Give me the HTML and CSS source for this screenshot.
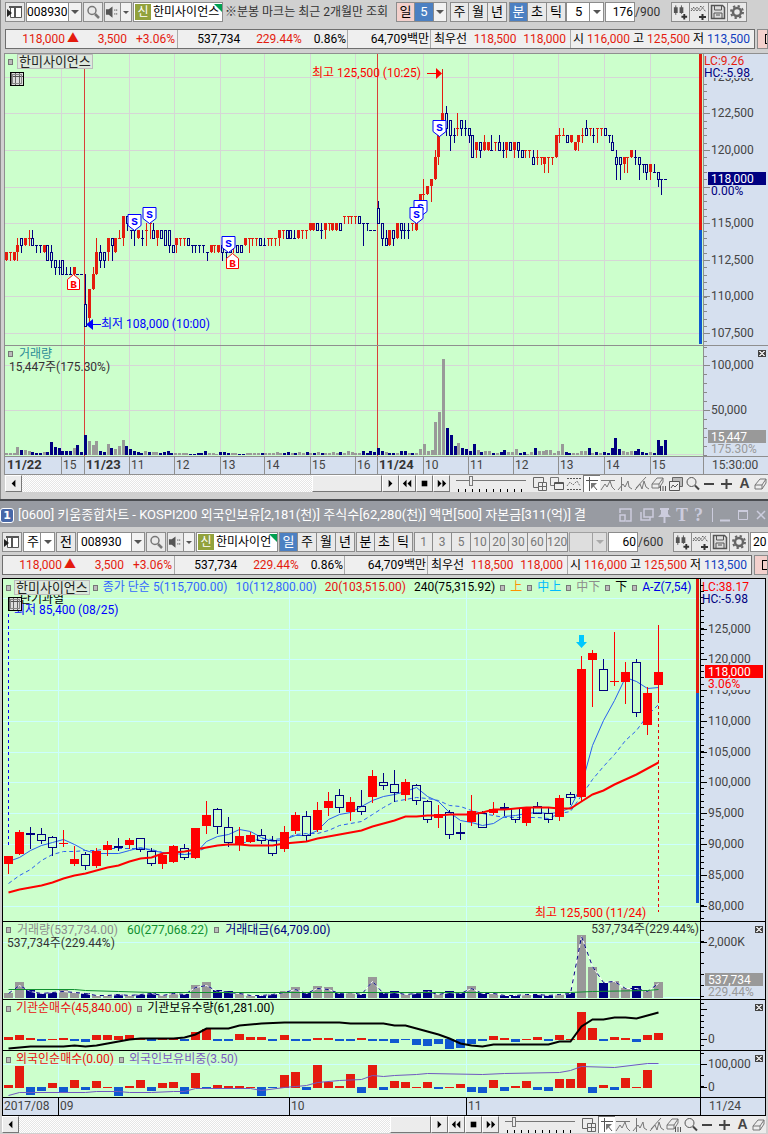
FILE: index.html
```html
<!DOCTYPE html>
<html lang="ko">
<head>
<meta charset="utf-8">
<title>키움종합차트</title>
<link rel="stylesheet" href="styles.css">
</head>
<body>
<svg class="defs" aria-hidden="true">
  <symbol id="i-panel" viewBox="0 0 18 18"><path d="M4 3h12v12H4z" fill="#fff"/><path d="M3 4h13M9 4v10" stroke="#555" stroke-width="2" fill="none"/><path d="M4.500 4v10.500h11V4" stroke="#555" fill="none"/><path d="M1 6l5 4-5 4z" fill="#222"/></symbol>
  <symbol id="i-search" viewBox="0 0 18 18"><circle cx="8" cy="7.500" r="4" fill="none" stroke="#777" stroke-width="1.500"/><path d="M11 11l4 4" stroke="#777" stroke-width="2.500"/></symbol>
  <symbol id="i-sound" viewBox="0 0 16 18"><path d="M1 6h3l4-3v12l-4-3H1z" fill="#555"/><path d="M10 6h1v2h-1zM12 6h1v2h-1zM10 10h1v2h-1zM12 10h1v2h-1z" fill="#777"/></symbol>
  <symbol id="i-candle" viewBox="0 0 18 18"><path d="M2 4h4v6H2zM8 4h4v6H8z" fill="#555"/><path d="M4 2v10M10 2v9" stroke="#555"/><path d="M10 14h6M13 11v6" stroke="#333" stroke-width="2"/></symbol>
  <symbol id="i-wave" viewBox="0 0 18 18"><path d="M1 8l3-4 3 4 4-5 5 6" fill="none" stroke="#555" stroke-dasharray="2 1"/><path d="M1 5l3 3 3-4 3 4 4-5" fill="none" stroke="#888"/><path d="M9 14h7M12.500 11v6" stroke="#333" stroke-width="2"/></symbol>
  <symbol id="i-save" viewBox="0 0 18 18"><path d="M2.500 2.500h11l2 2v11h-13z" fill="#ddd" stroke="#555" stroke-width="1.500"/><path d="M5.500 3v4h7V3M5 15v-5h8v5M7 12h4" fill="none" stroke="#555"/></symbol>
  <symbol id="i-gear" viewBox="0 0 18 18"><circle cx="9" cy="9" r="4" fill="none" stroke="#666" stroke-width="2.500"/><circle cx="9" cy="9" r="6" fill="none" stroke="#666" stroke-width="2" stroke-dasharray="2.300 2.400"/></symbol>
  <symbol id="t-add" viewBox="0 0 16 16"><path d="M1.500 1.500h10v10h-10z" fill="none" stroke="#666"/><path d="M6.500 6.500h8v8h-8zM10.500 6.500v8M6.500 10.500h8" fill="#eee" stroke="#666"/></symbol>
  <symbol id="t-copy" viewBox="0 0 16 16"><path d="M1.500 1.500h8v8h-8z" fill="#eee" stroke="#777"/><path d="M5.500 6.500h9v7h-9zM5 7.500h10" fill="#eee" stroke="#555"/></symbol>
  <symbol id="t-range" viewBox="0 0 16 16"><path d="M1 2.500h14M1 13.500h14" stroke="#555" stroke-dasharray="2 1"/><path d="M1 10l3-4 3 3 4-4 3 5" fill="none" stroke="#777" stroke-dasharray="2 1"/></symbol>
  <symbol id="t-cursor" viewBox="0 0 16 16"><path d="M2 4.500h12M5.500 1v14M8 8l5 6" fill="none" stroke="#555"/><path d="M7 7h6l-6 6z" fill="#777"/></symbol>
  <symbol id="t-hline" viewBox="0 0 16 16"><path d="M1 4.500h14M1 14l4-6 2 3 3-6 2 6 3 3" fill="none" stroke="#777"/></symbol>
  <symbol id="t-vline" viewBox="0 0 16 16"><path d="M4.500 1v14M1 14l5-6 2 3 3-6 1 6 3 2" fill="none" stroke="#777"/></symbol>
  <symbol id="t-trend" viewBox="0 0 16 16"><path d="M2 12L12 1M1 14l5-6 2 5 2-8 2 6 3 2" fill="none" stroke="#777"/></symbol>
  <symbol id="t-erase" viewBox="0 0 16 16"><path d="M1 8l5-6h6l-4 6zM1 8v4h7l4-6V2M8 8v4" fill="#eee" stroke="#777"/><path d="M9.500 10v5M12 10v5M14.500 10v5" stroke="#555"/></symbol>
  <symbol id="t-charts" viewBox="0 0 16 16"><path d="M4.500 1.500h10v9h-10z" fill="#bbb" stroke="#666"/><path d="M1.500 5.500h10v9h-10z" fill="#eee" stroke="#555"/><path d="M3 12l2-3 2 2 3-3" fill="none" stroke="#555"/></symbol>
  <symbol id="t-zoom" viewBox="0 0 16 16"><circle cx="6.500" cy="6" r="4.500" fill="none" stroke="#555"/><path d="M10 9.500l4 4" stroke="#444" stroke-width="2"/></symbol>
  <symbol id="t-minus" viewBox="0 0 16 16"><path d="M2 8h10" stroke="#444" stroke-width="2"/></symbol>
  <symbol id="t-plus" viewBox="0 0 16 16"><path d="M2 8h11M7.500 3v10" stroke="#444" stroke-width="2"/></symbol>
  <symbol id="t-eraser" viewBox="0 0 16 16"><path d="M2 9l5-6h6l-4 6zM2 9v4h7l4-6V3M9 9v4" fill="#eee" stroke="#777"/></symbol>
</svg>

<main>
<section class="window window-a">
  <div class="toolbar">
    <button class="tb w20" aria-label="패널"><svg><use href="#i-panel"/></svg></button>
    <div class="combo"><input class="code" aria-label="종목코드" value="008930"><button class="drop" aria-label="목록"></button></div>
    <button class="tb w20" aria-label="검색"><svg><use href="#i-search"/></svg></button>
    <div class="group"><button class="tb w17" aria-label="소리"><svg><use href="#i-sound"/></svg></button><button class="drop thin" aria-label="소리 설정"></button></div>
    <div class="stock"><b>신</b><input aria-label="종목명" value="한미사이언스"></div>
    <p class="note">※분봉 마크는 최근 2개월만 조회</p>
    <div class="group"><button class="tb w19 pink">일</button><button class="tb w19 on">5</button><button class="drop" aria-label="일 주기"></button></div>
    <div class="group"><button class="tb w19">주</button><button class="tb w19">월</button><button class="tb w19">년</button></div>
    <div class="group"><button class="tb w19 on">분</button><button class="tb w19">초</button><button class="tb w19">틱</button><span class="pick pick-a"><select aria-label="분 주기"><option>5</option></select></span></div>
    <div class="count"><input aria-label="조회 봉수" value="176"><span>/900</span></div>
    <div class="group"><button class="tb w19" aria-label="봉"><svg><use href="#i-candle"/></svg></button><button class="tb w19" aria-label="지표"><svg><use href="#i-wave"/></svg></button><button class="tb w19" aria-label="저장"><svg><use href="#i-save"/></svg></button><button class="tb w19" aria-label="설정"><svg><use href="#i-gear"/></svg></button></div>
  </div>

  <div class="quote">
    <dl>
      <div class="q1"><dd class="up">118,000</dd><dd class="up arrow">▲</dd><dd class="up n2">3,500</dd><dd class="up n3">+3.06%</dd></div>
      <div class="q2"><dd>537,734</dd><dd class="up">229.44%</dd><dd>0.86%</dd></div>
      <div class="q3"><dd>64,709백만</dd></div>
      <div class="q4"><dt>최우선</dt><dd class="up">118,500</dd><dd class="up">118,000</dd></div>
      <div class="q5"><dt>시</dt><dd class="up">116,000</dd><dt>고</dt><dd class="up">125,500</dd><dt>저</dt><dd class="down">113,500</dd></div>
    </dl>
    <button class="tb pink more" aria-label="더 보기"></button>
  </div>

  <div class="chart chart-a">
    <div class="pane price">
      <div class="plot">
        <svg id="a-price"></svg>
        <div class="legend"><i></i><span class="name">한미사이언스</span></div>
        <button class="gridbtn" aria-label="데이터 표"></button>
      </div>
      <svg class="axis" id="a-price-axis"></svg>
    </div>
    <div class="pane volume">
      <div class="plot">
        <svg id="a-volume"></svg>
        <div class="legend stack"><span><i></i><span class="teal">거래량</span></span><span class="dim">15,447주(175.30%)</span></div>
      </div>
      <svg class="axis" id="a-volume-axis"></svg>
      <button class="close" aria-label="닫기"></button>
    </div>
    <div class="pane times"><svg class="plot" id="a-times"></svg><span class="now">15:30:00</span></div>
  </div>

  <div class="strip">
    <button class="sb" aria-label="왼쪽"><svg viewBox="0 0 16 16"><path d="M10 4v8L6 8z"/></svg></button>
    <div class="track"><span class="thumb"></span></div>
    <button class="sb" aria-label="오른쪽"><svg viewBox="0 0 16 16"><path d="M6 4v8l4-4z"/></svg></button>
    <button class="sb" aria-label="뒤로"><svg viewBox="0 0 16 16"><path d="M7 4v8L3 8zM12 4v8L8 8z"/></svg></button>
    <button class="sb" aria-label="정지"><svg viewBox="0 0 16 16"><path d="M5 5h6v6H5z"/></svg></button>
    <button class="sb" aria-label="앞으로"><svg viewBox="0 0 16 16"><path d="M4 4v8l4-4zM9 4v8l4-4z"/></svg></button>
    <input class="speed" type="range" aria-label="속도" min="0" max="10" value="2">
    <div class="tools"><button aria-label="추가"><svg><use href="#t-add"/></svg></button><button aria-label="복사"><svg><use href="#t-copy"/></svg></button><button aria-label="구간"><svg><use href="#t-range"/></svg></button><button class="pressed" aria-label="십자선"><svg><use href="#t-cursor"/></svg></button><button aria-label="수평선"><svg><use href="#t-hline"/></svg></button><button aria-label="수직선"><svg><use href="#t-vline"/></svg></button><button aria-label="추세선"><svg><use href="#t-trend"/></svg></button><button aria-label="모두 지우기"><svg><use href="#t-erase"/></svg></button><button aria-label="차트 겹치기"><svg><use href="#t-charts"/></svg></button><button aria-label="돋보기"><svg><use href="#t-zoom"/></svg></button><button aria-label="축소"><svg><use href="#t-minus"/></svg></button><button aria-label="확대"><svg><use href="#t-plus"/></svg></button><button class="letter">A</button><button aria-label="지우개"><svg><use href="#t-eraser"/></svg></button></div>
  </div>
</section>

<section class="window window-b">
  <header class="title">
    <b class="num">1</b>
    <h1>[0600] 키움종합차트 - KOSPI200 외국인보유[2,181(천)] 주식수[62,280(천)] 액면[500] 자본금[311(억)] 결</h1>
    <svg class="winicons" viewBox="0 0 150 24" role="img" aria-label="창 단추">
      <g fill="none" stroke="#ccd" stroke-width="1.500"><path d="M2 10V6h11v12h-5M2 12h5v6H2z"/><path d="M26 6h9v8h-9zM23 9v8h9v-3"/></g>
      <path d="M42 5h9v2h-1v4l3 3H40l3-3V7h-1zM45.500 14h2v6h-2z" fill="#ccd"/>
      <g fill="none" stroke="#ccd"><path d="M94.500 5v14" /><path d="M102 17.500h10" stroke-width="2"/><path d="M120.500 7.500h9v9h-9z"/><path d="M120 8h10" stroke-width="2"/><path d="M139 8l8 8M147 8l-8 8" stroke-width="1.500"/></g>
      <text x="58" y="18" class="wi">T</text><text x="76" y="18" class="wi">?</text>
    </svg>
  </header>
  <div class="toolbar">
    <button class="tb w20" aria-label="패널"><svg><use href="#i-panel"/></svg></button>
    <span class="pick pick-b"><select aria-label="종류"><option>주</option></select></span>
    <button class="tb w20">전</button>
    <div class="combo wide"><input class="code" aria-label="종목코드" value="008930"><button class="drop" aria-label="목록"></button></div>
    <button class="tb w20" aria-label="검색"><svg><use href="#i-search"/></svg></button>
    <div class="group"><button class="tb w17" aria-label="소리"><svg><use href="#i-sound"/></svg></button><button class="drop thin" aria-label="소리 설정"></button></div>
    <div class="stock short"><b>신</b><input aria-label="종목명" value="한미사이언"></div>
    <div class="group"><button class="tb w19 on">일</button><button class="tb w19">주</button><button class="tb w19">월</button><button class="tb w19">년</button></div>
    <div class="group"><button class="tb w19">분</button><button class="tb w19">초</button><button class="tb w19">틱</button></div>
    <div class="group off"><button class="tb w19">1</button><button class="tb w19">3</button><button class="tb w19">5</button><button class="tb w19">10</button><button class="tb w19">20</button><button class="tb w19">30</button><button class="tb w19">60</button><button class="tb w21">120</button></div>
    <span class="pick pick-a off"><select aria-label="주기" disabled><option></option></select></span>
    <div class="count"><input aria-label="조회 봉수" value="60"><span>/600</span></div>
    <div class="group"><button class="tb w19" aria-label="봉"><svg><use href="#i-candle"/></svg></button><button class="tb w19" aria-label="지표"><svg><use href="#i-wave"/></svg></button><button class="tb w19" aria-label="저장"><svg><use href="#i-save"/></svg></button><button class="tb w19" aria-label="설정"><svg><use href="#i-gear"/></svg></button></div>
    <input class="extra" aria-label="연도" value="20">
  </div>

  <div class="quote">
    <dl>
      <div class="q1"><dd class="up">118,000</dd><dd class="up arrow">▲</dd><dd class="up n2">3,500</dd><dd class="up n3">+3.06%</dd></div>
      <div class="q2"><dd>537,734</dd><dd class="up">229.44%</dd><dd>0.86%</dd></div>
      <div class="q3"><dd>64,709백만</dd></div>
      <div class="q4"><dt>최우선</dt><dd class="up">118,500</dd><dd class="up">118,000</dd></div>
      <div class="q5"><dt>시</dt><dd class="up">116,000</dd><dt>고</dt><dd class="up">125,500</dd><dt>저</dt><dd class="down">113,500</dd></div>
    </dl>
    <button class="tb pink more" aria-label="더 보기"></button>
  </div>

  <div class="chart chart-b">
    <div class="pane price">
      <div class="plot">
        <svg id="b-price"></svg>
        <div class="legend"><i></i><span class="name">한미사이언스</span><i></i><span class="blue">종가 단순 5(115,700.00)</span><span class="blue">10(112,800.00)</span><span class="red">20(103,515.00)</span><span>240(75,315.92)</span><i></i><span class="orange">上</span><i></i><span class="sky">中上</span><i></i><span class="mute">中下</span><i></i><span>下</span><i></i><span class="deep">A-Z(7,54)</span></div>
        <button class="gridbtn" aria-label="데이터 표"></button>
      </div>
      <svg class="axis" id="b-price-axis"></svg>
    </div>
    <div class="pane volume">
      <div class="plot">
        <svg id="b-volume"></svg>
        <div class="legend stack"><span><i></i><span class="mute">거래량(537,734.00)</span><span class="green">60(277,068.22)</span><i></i><span class="navy">거래대금(64,709.00)</span></span><span class="dim">537,734주(229.44%)</span></div>
        <span class="corner dim">537,734주(229.44%)</span>
      </div>
      <svg class="axis" id="b-volume-axis"></svg>
      <button class="close" aria-label="닫기"></button>
    </div>
    <div class="pane inst">
      <div class="plot">
        <svg id="b-inst"></svg>
        <div class="legend"><i></i><span class="red">기관순매수(45,840.00)</span><i></i><span>기관보유수량(61,281.00)</span></div>
      </div>
      <svg class="axis" id="b-inst-axis"></svg>
      <button class="close" aria-label="닫기"></button>
    </div>
    <div class="pane foreign">
      <div class="plot">
        <svg id="b-foreign"></svg>
        <div class="legend"><i></i><span class="red">외국인순매수(0.00)</span><i></i><span class="violet">외국인보유비중(3.50)</span></div>
      </div>
      <svg class="axis" id="b-foreign-axis"></svg>
      <button class="close" aria-label="닫기"></button>
    </div>
    <div class="pane times"><svg class="plot" id="b-times"></svg><span class="now">11/24</span></div>
  </div>

  <div class="strip">
    <button class="sb" aria-label="왼쪽"><svg viewBox="0 0 16 16"><path d="M10 4v8L6 8z"/></svg></button>
    <div class="track"><span class="thumb"></span></div>
    <button class="sb" aria-label="오른쪽"><svg viewBox="0 0 16 16"><path d="M6 4v8l4-4z"/></svg></button>
    <button class="sb" aria-label="뒤로"><svg viewBox="0 0 16 16"><path d="M7 4v8L3 8zM12 4v8L8 8z"/></svg></button>
    <button class="sb" aria-label="정지"><svg viewBox="0 0 16 16"><path d="M5 5h6v6H5z"/></svg></button>
    <button class="sb" aria-label="앞으로"><svg viewBox="0 0 16 16"><path d="M4 4v8l4-4zM9 4v8l4-4z"/></svg></button>
    <input class="speed" type="range" aria-label="속도" min="0" max="10" value="1">
    <div class="tools"><button aria-label="추가"><svg><use href="#t-add"/></svg></button><button class="pressed" aria-label="십자선"><svg><use href="#t-cursor"/></svg></button><button aria-label="수평선"><svg><use href="#t-hline"/></svg></button><button aria-label="수직선"><svg><use href="#t-vline"/></svg></button><button aria-label="추세선"><svg><use href="#t-trend"/></svg></button><button aria-label="모두 지우기"><svg><use href="#t-erase"/></svg></button><button aria-label="돋보기"><svg><use href="#t-zoom"/></svg></button><button aria-label="축소"><svg><use href="#t-minus"/></svg></button><button aria-label="확대"><svg><use href="#t-plus"/></svg></button><button class="letter">A</button><button aria-label="지우개"><svg><use href="#t-eraser"/></svg></button></div>
  </div>
</section>
</main>
<script src="charts.js"></script>
</body>
</html>
```

FILE: styles.css
```css
* { box-sizing: border-box; }
body {
  margin: 0;
  background: #d0d0d0;
  color: #000;
  font: 12px/16px Roboto, "Noto Sans CJK KR", sans-serif;
}
button, input, select { font: inherit; color: inherit; margin: 0; padding: 0; border: 0; border-radius: 0; }
p, h1, dl, dd, dt { margin: 0; font-weight: 400; }
.defs { position: absolute; width: 0; height: 0; }
main { overflow: hidden; }
.window { display: flex; flex-direction: column; }
.window-a { border-left: 1px solid #8a8a8a; padding: 2px 0 7px 4px; }
.window-b { padding-left: 2px; }

/* toolbars */
.toolbar { display: flex; gap: 1px; height: 20px; overflow: hidden; }
.toolbar > * { flex: none; }
.group { display: flex; }
.tb { height: 20px; border: 1px solid #8c8c8c; background: #e9e9e9; text-align: center; font-size: 13px; line-height: 18px; overflow: hidden; }
.tb + .tb { border-left-width: 0; }
.tb svg { display: block; width: 100%; height: 18px; }
.w20 { width: 20px; }
.w21 { width: 21px; }
.w19 { width: 19px; }
.w17 { width: 17px; }
.pink { background: #f3d0cc; }
.on { background: #4c80c2; color: #fff; }
.off .tb { color: #777; font-size: 12px; }
.combo { display: flex; width: 56px; }
.combo.wide { width: 68px; }
.combo.wide input { padding-left: 3px; }
.combo input { flex: 1; min-width: 0; height: 20px; padding-left: 0; border: 1px solid #8c8c8c; background: #fff; }
.drop { width: 13px; height: 20px; border: 1px solid #8c8c8c; border-left: 0; background: #f2f2f2; display: grid; place-items: center; }
.drop.thin { width: 11px; }
.drop::before, .pick::after { content: ""; width: 0; height: 0; border: 4px solid transparent; border-top-color: #555; border-bottom-width: 0; }
.drop.thin::before { border-width: 3px 3px 0; }
.pick { position: relative; display: block; height: 20px; }
.pick::after { position: absolute; right: 3px; top: 8px; }
.pick select { width: 100%; height: 20px; border: 1px solid #8c8c8c; background: linear-gradient(#8c8c8c, #8c8c8c) right 13px top / 1px 100% no-repeat #fff; appearance: none; padding-left: 3px; }
.pick-a { width: 38px; }
.pick-a select { padding-left: 8px; font-size: 13px; }
.pick-b { width: 32px; }
.pick-b select { font-size: 13px; }
.pick.off select { background-color: #e4e4e4; }
.pick.off::after { border-top-color: #aaa; }
.stock { position: relative; display: flex; align-items: center; width: 90px; height: 20px; padding: 1px; border: 1px solid #8c8c8c; background: #fff; }
.stock.short { width: 82px; }
.stock b { flex: none; width: 16px; height: 16px; background: #92a23c; color: #fff; font-weight: 400; text-align: center; line-height: 16px; }
.stock input { flex: 1; min-width: 0; height: 16px; padding-left: 2px; background: none; overflow: hidden; }
.stock::after { content: ""; position: absolute; right: 0; top: 1px; border: 4px solid #00a050; border-left-color: transparent; border-bottom-color: transparent; }
.note { width: 171px; padding-left: 1px; line-height: 20px; color: #333; white-space: nowrap; }
.count { display: flex; align-items: center; width: 64px; }
.count input { width: 30px; height: 20px; border: 1px solid #8c8c8c; background: #fff; text-align: right; padding-right: 1px; }
.count span { color: #333; }
.extra { width: 30px; height: 20px; border: 1px solid #8c8c8c; padding-left: 2px; }
.window-a .group + .group { margin-left: 2px; }
.window-a .group + .group ~ .group { margin-left: 1px; }

/* quote line */
.quote { display: flex; gap: 2px; height: 20px; overflow: hidden; }
.window-a .quote { margin-top: 7px; }
.quote dl { flex: none; display: flex; width: 750px; border: 1px solid #6e6e6e; background: #efefef; }
.quote dl > div { display: flex; align-items: center; border-right: 1px solid #aaa; line-height: 18px; white-space: nowrap; }
.quote dl > div:last-child { border: 0; }
.quote .q1 { width: 172px; justify-content: flex-end; padding-right: 2px; }
.q1 .arrow { width: 16px; text-align: center; }
.n2 { width: 46px; text-align: right; }
.n3 { width: 48px; text-align: right; }
.quote .q2 { width: 170px; justify-content: flex-end; gap: 12px; padding-right: 1px; }
.q2 dd:first-child { margin-right: 4px; }
.quote .q3 { width: 83px; justify-content: flex-end; padding-right: 1px; }
.quote .q4 { width: 140px; justify-content: space-between; padding: 0 4px 0 3px; }
.quote .q5 { flex: 1; justify-content: space-between; padding: 0 4px 0 2px; }
.more { flex: 1; }
.more::before { content: ""; display: block; width: 8px; height: 8px; margin-left: 7px; border: 1px solid #000; }
.up { color: #e41b0e; }
.down { color: #1040c0; }

/* chart panes */
.chart { display: flex; flex-direction: column; }
.chart-a { --rule: #8f8f8f; margin-top: 4px; border-left: 1px solid #8f8f8f; border-top: 1px solid #8f8f8f; margin-left: -1px; }
.chart-b { --rule: #000; margin-top: 3px; margin-right: 2px; border: 1px solid #000; border-bottom: 0; }
.pane { position: relative; display: flex; border-bottom: 1px solid var(--rule); background: #d6e0ef; }
.plot { position: relative; flex: 1; min-width: 0; overflow: hidden; background: #ccffcc; }
.plot > svg { display: block; width: 100%; height: 100%; }
.axis { flex: none; width: 65px; height: 100%; border-left: 1px solid var(--rule); overflow: hidden; }
.chart-a .price { height: 292px; }
.chart-a .volume { height: 111px; }
.chart-b .price { height: 343px; }
.chart-b .volume { height: 78px; }
.inst { height: 51px; }
.foreign { height: 47px; }
.times { height: 18px; color: #444; }
.times .plot { background: #d6e0ef; height: 17px; }
.now { flex: none; width: 65px; padding-left: 8px; border-left: 1px solid var(--rule); line-height: 16px; }
.close { position: absolute; right: 2px; top: 4px; width: 8px; height: 7px; background: linear-gradient(45deg, transparent 45%, #ddd 45% 55%, transparent 55%) 1px 1px / 6px 5px no-repeat, linear-gradient(-45deg, transparent 45%, #ddd 45% 55%, transparent 55%) 1px 1px / 6px 5px no-repeat, #444; }
.legend { position: absolute; left: 3px; top: 0; display: flex; align-items: center; gap: 6px; white-space: nowrap; line-height: 15px; }
.chart-b .legend { gap: 5px; top: 1px; }
.chart-b .legend .blue + .blue, .legend .red + span, .legend .green, .legend .blue + .red { margin-left: 3px; }
.legend.stack { top: 1px; flex-direction: column; align-items: flex-start; gap: 0; line-height: 13px; }
.legend.stack > span:first-child { display: flex; align-items: center; gap: 6px; line-height: 14px; }
.legend.stack > .dim { margin-left: 1px; }
.legend i { width: 5px; height: 6px; border: 1px solid #777; background: #bbb; }
.name { margin: 0 -2px; padding: 0 1px; border: 1px solid #bbb; background: #dde8dd; font-size: 13px; line-height: 13px; color: #222; }
.corner { position: absolute; right: 1px; top: 0; line-height: 15px; }
.gridbtn { position: absolute; left: 5px; top: 18px; width: 14px; height: 14px; border: 1px solid #000; background: linear-gradient(#555, #555) 0 3px / 100% 1px no-repeat, repeating-linear-gradient(90deg, #666 0 1px, #ddd 1px 4px); outline: 1px solid #888; outline-offset: -3px; }
.dim { color: #333; }
.teal { color: #2a8c96; }
.blue { color: #3366ff; }
.red { color: #e81010; }
.orange { color: #ff9000; }
.sky { color: #00bbff; }
.mute { color: #8c8c8c; }
.deep { color: #0000e8; }
.green { color: #109030; }
.navy { color: #000080; }
.violet { color: #7a5cc0; }
svg text { font-size: 12px; fill: #444; }
svg .mark { font: bold 11px "Liberation Mono", monospace; text-anchor: middle; }
svg .bold { font-size: 13px; font-weight: 700; }
svg .wi { font: bold 18px "Liberation Serif", serif; fill: #ccd; }

/* scroll strip */
.strip { display: flex; height: 17px; background: #ececec; }
.sb { flex: none; width: 17px; height: 17px; border: 1px solid; border-color: #fff #777 #777 #fff; background: #ececec; }
.sb svg { display: block; width: 15px; height: 15px; }
.track { flex: 1; display: flex; justify-content: flex-end; background: repeating-conic-gradient(#fff 0 25%, #e6e6e6 0 50%) 0 0 / 2px 2px; }
.thumb { width: 70px; border: 1px solid; border-color: #fff #777 #777 #fff; background: #ececec; }
.window-b .thumb { width: 41px; }
.speed { flex: none; appearance: none; width: 70px; height: 17px; margin: 0 6px; background: linear-gradient(#777, #777) 0 5px / 100% 1px no-repeat, repeating-linear-gradient(90deg, transparent 0 2px, #000 2px 3px, transparent 3px 7px) 0 14px / 100% 3px no-repeat; }
.speed::-webkit-slider-thumb { appearance: none; width: 4px; height: 10px; margin-top: -5px; border: 1px solid #777; background: #eee; }
.tools { flex: none; display: flex; width: 236px; }
.window-b .tools { width: 185px; }
.tools button { flex: none; width: 17px; height: 17px; background: none; }
.tools button:last-child { width: 15px; }
.tools svg { display: block; width: 16px; height: 16px; }
.tools .pressed { border-left: 1px solid #777; border-top: 1px solid #777; background: #fff; }
.tools .letter { color: #444; font: bold 14px/17px "Liberation Sans", sans-serif; }

/* second window */
.title { display: flex; align-items: center; gap: 4px; height: 28px; margin-left: -2px; padding-top: 2px; border-top: 2px solid #4a4c50; background: #989ba2; color: #fff; }
.title .num { flex: none; width: 14px; height: 15px; border: 1px solid #fff; border-radius: 3px; background: #4868a8; font: bold 11px/13px "DejaVu Sans", sans-serif; text-align: center; }
.title h1 { flex: 1; min-width: 0; overflow: hidden; white-space: nowrap; font-size: 13px; line-height: 18px; }
.winicons { flex: none; width: 150px; height: 24px; }
.window-b .toolbar { padding-top: 5px; height: 25px; }
.window-b .quote { margin-top: 3px; }
.window-b .strip { margin-right: 2px; }
```

FILE: charts.js
```js
const NAVY = '#000080', RED = '#e41b0e', GRAY = '#999999', BLUE = '#1058d0', PANEL = '#d6e0ef';

const rect = (x, y, w, h, fill, stroke) =>
  `<rect x="${x}" y="${y}" width="${w}" height="${h}" fill="${fill}"${stroke ? ` stroke="${stroke}"` : ''}/>`;
const line = (x1, y1, x2, y2, color, extra = '') =>
  `<line x1="${x1}" y1="${y1}" x2="${x2}" y2="${y2}" stroke="${color}" ${extra}/>`;
const text = (x, y, s, color, cls = '') =>
  `<text x="${x}" y="${y}" class="${cls}" style="fill:${color}">${s}</text>`;
const draw = (id, ox, oy, body, fixed = '') => {
  document.getElementById(id).innerHTML = `<g transform="translate(${-ox} ${-oy})">${body}</g>${fixed}`;
};
const grid = (xs, ys, top, bottom, color) =>
  ys.map(y => line(0, y + .5, 4000, y + .5, color)).join('') +
  xs.map(x => line(x + .5, top, x + .5, bottom, color)).join('');
const sideBar = (red, blue) =>
  `<svg x="100%" overflow="visible">${rect(-4, 0, 3, red, RED)}${rect(-4, red, 3, blue, BLUE)}</svg>`;

function candle(color, x, top, bodyTop, bodyBottom, bottom, half) {
  const h = bodyBottom - bodyTop;
  const hollow = color === NAVY && h >= 3;
  let s = '';
  if (hollow) {
    s += line(x + .5, top, x + .5, bodyTop, color) + line(x + .5, bodyBottom, x + .5, bottom + 1, color);
    s += rect(x - half + .5, bodyTop + .5, half * 2, h, 'none', NAVY);
  } else {
    s += line(x + .5, top, x + .5, bottom + 1, color);
    s += rect(x - half, bodyTop, half * 2 + 1, Math.max(1, h), color);
  }
  return s;
}

/* 5-minute chart. Each bar: colour, then low, body low, body high, high in 500-won steps, base 36 */
const sessions = [
  [6, 79, 'Raabb Rabbb Raabb Rabcd Bbcdd Rccdd Rcdde Bccde Bbccc Bbccc Rbbcc Baacc B9abc B89aa B899a B88aa B8889 B8889 R8899 B8888 B8888'],
  [85, 293, 'B1148 R1266 R6689 R88bd B9abc B9abb Rabdd Bacdd Rbbdd Rddde Rcdgg Befgg Bdeee Bceef Rddee Bcdde Rceef Rdfff Bddef Rcdee Bddee Bccee Bbcee Bbbcc Rbcdd Rcddd Rcddd Bccdd Bbccc Bbccc Bbccc Bbccc Babbb Rbbcc Rbccc Rbbcc Babcc B9bbb Bbbcc Rbccc Bbbcc Bbbcc Rccdd Rbddd Rcddd Rcddd Bccdd Bcccd Rcddd Rcddd Rcddd Rcdee Rdeee Bddee Bddee Bddde Rddee Rdeee Rdeee Reeff Reeff Beeff Bdeef Rdeff Refff Reeff Reeff Beeff Rfggg Rfggg Rfggg Rfggg Bffgg Bcfff Befff Beeee Beeee'],
  [378, 291, 'Bffhi Bcdff Bccde Rccee Bcdee Rddff Bdeff Bdeef Bdeef Refff Reeff Rhhjj Rijjl Rjjkk Rikll Rllop Rnorr Rttuz Brsuv Bprtt Bqrrs Rrssu Brstt Brsst Bqrss Boorr Ropqq Bopqq Rppqr Rppqq Bpppr Rpqqq Bppqr Boppq Ropqq Bppqq Ropqq Bopqq Boopp Roppp Roppp Bnnop Rnoop Rnooo Rmnoo Rmooo Rnooo Roorr Rqrrs Rrrrs Bqqrr Rqqrr Rppqq Rpqrr Rqrrs Brrst Rrsss Bqrrs Rqsss Rrsss Brrss Bqrrr Bppqr Blnop Blnoo Rmnoo Rmooo Roopp Bnoop Blnoo Bmnnn Blmnn Rlmnn Bmmmn Bklmm Bjlll Bllll']
];
const volumes = [
  'g2 g2 g2 g8 n5 g5 g4 n3 n2 n2 g3 n3 n13 n8 n7 n4 n4 n4 g7 n10 n3',
  'n20 g14 g10 g14 n4 n3 g11 n7 g6 g9 g15 n9 n6 n4 n3 n2 g4 n3 g3 g3 n2 n3 n4 n2 g2 g2 g2 g2 n1 n1 n2 n2 n4 g2 g2 g1 n3 n3 n2 g2 g2 n1 n1 g2 g2 g2 g2 n2 g2 g2 g2 g3 g2 n2 n3 g2 n2 g3 g2 n3 g2 n2 g3 n2 g2 g2 g3 g2 n3 g2 g4 g3 g2 g2 n4 n2 n4 n3',
  'n7 n4 g3 n2 n2 g2 n4 n4 g2 n2 g2 g6 g11 g4 g5 g33 g43 g96 n27 n20 n9 g12 n7 n6 n4 n11 g5 n3 g4 g4 n2 g2 n3 n5 g3 g3 g6 n2 n3 g1 g3 n7 g4 g4 g5 g5 g2 g4 g11 n3 n2 g2 g2 g4 g4 n7 g2 n3 g2 n3 n2 n7 n17 n6 g4 g3 g4 n4 n6 n3 n2 g3 n2 n15 n9 n15'
];
const hours = [[61, '15'], [129, '11'], [174, '12'], [220, '13'], [264, '14'], [310, '15'], [355, '16'], [423, '10'], [468, '11'], [513, '12'], [558, '13'], [604, '14'], [650, '15']];
const days = [84, 377];
const level = n => Math.round(333 - n * 7.33);
const marker = (kind, x, y) => kind === 'S'
  ? `<path d="M${x - 6} ${y + .5}h13v11l-6.500 5-6.500-5z" fill="#fff" stroke="#00f"/>` + text(x + .5, y + 11, 'S', '#00f', 'mark')
  : `<path d="M${x + .5} ${y + .5}l6 5v10h-12v-10z" fill="#fff" stroke="#f00"/>` + text(x + .5, y + 14, 'B', '#f00', 'mark');

let body = grid(hours.map(h => h[0]), [77, 113, 150, 187, 223, 260, 296, 333], 0, 400, '#d6d6d6');
body += days.map(x => line(x + .5, 0, x + .5, 400, '#d84038')).join('');
for (const [start, width, data] of sessions) {
  const bars = data.split(' ');
  bars.forEach((b, i) => {
    const [l, bl, bh, h] = [...b.slice(1)].map(c => level(parseInt(c, 36)));
    body += candle(b[0] === 'R' ? RED : NAVY, Math.round(start + i * width / bars.length), h, bh, bl, l, 1);
  });
}
body += line(442.5, 69, 442.5, 120, RED);
body += [['S', 134, 214], ['S', 149, 207], ['S', 228, 236], ['S', 420, 200], ['S', 416, 207], ['S', 439, 120], ['B', 73, 274], ['B', 232, 253]].map(m => marker(...m)).join('');
body += text(312, 77, '최고 125,500 (10:25)', '#f00') + line(427, 73.5, 438, 73.5, '#f00') + '<path d="M436 68v11l6-5.500z" fill="#f00"/>';
body += text(101, 328, '최저 108,000 (10:00)', '#00f') + line(92, 324.5, 101, 324.5, '#00f') + '<path d="M93 319v11l-7-5.500z" fill="#00f"/>';
draw('a-price', 5, 54, body, sideBar(176, 114));

const ticks = (from, to, step, x, major, color) => {
  let s = '';
  for (let y = from; y <= to; y += step) s += line(x, Math.round(y) + .5, x + 3, Math.round(y) + .5, color);
  return s + major.map(y => line(x, y + .5, x + 6, y + .5, color)).join('');
};
const badge = (x, y, s, sub, color, subColor) =>
  rect(x, y, 58, 13, color) + text(x + 3, y + 11, s, '#fff') + text(x + 3, y + 23, sub, subColor);

const aMajor = [113, 150, 187, 223, 260, 296, 333];
body = ticks(84, 343, 7.33, 704, aMajor, '#888');
body += text(711, 81, '125,000', '#444') + rect(704, 54, 64, 24, PANEL);
body += text(704, 65, 'LC:9.26', RED) + text(704, 77, 'HC:-5.98', NAVY);
[[113, '122,500'], [150, '120,000'], [223, '115,000'], [260, '112,500'], [296, '110,000'], [333, '107,500']].forEach(([y, s]) => body += text(711, y + 4, s, '#444'));
body += badge(708, 172, '118,000', '0.00%', NAVY, NAVY);
draw('a-price-axis', 704, 54, body);

body = grid(hours.map(h => h[0]), [365, 410, 454], 340, 460, '#d6d6d6') + days.map(x => line(x + .5, 340, x + .5, 460, '#d84038')).join('');
volumes.forEach((v, s) => {
  const bars = v.split(' '), [start, width] = sessions[s];
  bars.forEach((b, i) => {
    const h = +b.slice(1);
    body += rect(Math.round(start + i * width / bars.length) - 1, 455 - h, 3, h, b[0] === 'n' ? NAVY : GRAY);
  });
});
draw('a-volume', 5, 346, body);
body = ticks(347, 455, 9, 704, [365, 410], '#888') + text(711, 369, '100,000', '#444') + text(711, 414, '50,000', '#444');
body += badge(708, 430, '15,447', '175.30%', GRAY, '#999');
draw('a-volume-axis', 704, 346, body);

body = hours.map(([x, s]) => line(x + .5, 450, x + .5, 480, '#8f8f8f') + text(x + 2, 469, s, '#444')).join('');
body += days.map(x => line(x + .5, 450, x + .5, 480, '#8f8f8f')).join('');
body += text(7, 469, '11/22', '#333', 'bold') + text(86, 469, '11/23', '#333', 'bold') + text(379, 469, '11/24', '#333', 'bold');
draw('a-times', 5, 457, body);

/* Daily chart. Each bar: colour, then top of wick, top and bottom of body, bottom of wick */
const daily = `r856,856,864,873 r830,832,854,854 b827,833,835,848 b828,834,840,843 b836,837,847,855 r830,843,844,846 r846,859,864,865 b852,854,865,869 r848,851,866,867 r841,845,850,855 b838,846,848,850 r838,840,845,848 b838,838,849,851 b848,851,863,865 r854,855,864,868 r845,846,862,862 b844,848,857,859 r828,828,858,858 r801,815,826,833 b808,809,826,833 b817,827,842,846 r827,836,844,850 r832,835,842,842 b829,835,840,843 b836,840,853,855 r826,832,849,851 r812,815,831,833 b811,816,835,841 r802,810,830,831 r792,801,808,815 b789,795,807,812 r797,802,812,820 b790,806,811,814 r770,776,797,802 b773,782,785,789 b770,784,792,801 r779,782,795,800 b784,785,800,804 b800,801,819,822 r805,814,818,827 b810,812,834,838 b823,832,834,839 r795,811,822,825 b811,813,827,827 r802,809,813,814 b803,807,809,815 b808,808,819,822 r807,807,823,825 b802,806,813,813 b808,813,819,822 r795,798,817,820 b792,794,797,804 r656,669,797,800 r650,653,660,706 b659,669,690,690 r632,681,682,685 r662,672,682,703 b659,662,712,716 r687,693,725,734 r625,672,685,700`.split(' ');
const ma5 = [861,857,850,845,842,839,844,850,853,853,853,850,847,850,852,853,854,853,841,836,834,829,831,837,841,839,835,835,830,819,814,812,806,800,796,794,791,787,796,801,812,820,822,825,823,816,815,813,812,813,812,807,785,745,720,700,677,681,688,687];
const ma10 = [883,875,869,860,854,851,851,850,850,848,848,848,848,849,852,853,854,852,847,845,844,843,841,838,839,838,834,833,833,830,825,823,821,814,807,801,799,797,798,800,805,806,810,813,815,817,817,817,817,818,813,811,795,779,766,754,740,730,715,704];
const ma20 = [892,889,887,885,882,878,875,873,870,867,865,861,858,857,853,852,851,849,847,845,844,844,845,845,845,843,842,841,838,836,834,832,830,826,823,820,816,816,815,815,814,814,814,812,809,809,808,807,807,807,808,808,801,794,790,784,779,774,768,762];
const vol = 'g5 g16 n8 n5 n6 g8 g6 n5 g3 g3 n4 g3 n4 n5 g3 g5 n4 g13 g16 n8 n7 g5 g2 n3 n4 g7 g11 n5 g12 g11 n5 g6 n4 g21 n5 n7 g4 n5 n8 g4 n7 n5 g12 n5 g5 n3 n3 g4 n4 n3 g4 n5 g63 g31 n15 g17 g10 n12 g7 g16'.split(' ');
const inst = [3,5,2,-2,1,2,-2,-3,5,5,4,5,1,-2,1,2,-2,8,11,-2,-2,6,3,3,-2,5,-2,-2,2,2,-2,-2,2,-2,-2,-4,-1,-6,-7,-5,-10,-9,-5,-2,4,2,-3,1,3,-2,5,1,28,12,-2,3,2,-3,5,7];
const foreign = [3,22,-8,-4,5,-5,8,-3,7,1,-9,2,8,-4,5,6,-7,15,-2,3,2,2,1,-9,-1,13,16,-3,23,6,2,14,-6,23,-3,7,6,1,6,-2,1,4,-5,-6,8,-4,2,7,-3,-4,9,9,25,-6,3,-3,10,1,18,0];
const instHeld = [[0,1048],[1,1047],[2,1046],[5,1046],[6,1045],[7,1046],[8,1045],[9,1043],[10,1041],[11,1039],[12,1038],[15,1038],[16,1037],[17,1034],[18,1028],[20,1028],[21,1025],[23,1023],[25,1022],[30,1022],[31,1023],[34,1023],[35,1025],[36,1025],[37,1028],[38,1031],[39,1034],[40,1038],[41,1043],[42,1045],[43,1046],[44,1044],[49,1044],[50,1041],[51,1041],[52,1026],[53,1019],[54,1019],[55,1017],[56,1017],[57,1018],[58,1015],[59,1012]];
const foreignHeld = [[0,1095],[1,1092],[7,1092],[8,1091],[10,1091],[11,1092],[13,1092],[15,1091],[16,1091],[17,1088],[22,1088],[23,1090],[25,1087],[26,1086],[27,1085],[28,1082],[30,1080],[32,1079],[33,1075],[34,1076],[35,1075],[37,1074],[38,1073],[43,1074],[45,1073],[50,1072],[51,1070],[52,1066],[55,1067],[58,1063],[59,1063]];
const months = [[58, '09'], [289, '10'], [466, '11']];
const mx = months.map(m => m[0]);
const dx = i => Math.round(8 + i * 11.02);
const path = (pts, color, w, dash = '') =>
  `<polyline points="${pts.map(([i, y]) => `${dx(i) + .5},${y + .5}`).join(' ')}" fill="none" stroke="${color}" stroke-width="${w}" stroke-dasharray="${dash}"/>`;
const indexed = ys => ys.map((y, i) => [i, y]);

body = grid(mx, [598, 629, 659, 690, 721, 752, 782, 813, 844, 875, 906], 0, 1000, '#ccffff');
body += line(8.5, 614, 8.5, 845, '#00f', 'stroke-dasharray="3 3"') + line(658.5, 700, 658.5, 912, '#e00', 'stroke-dasharray="3 3"');
const bars = daily.map((b, i) => candle(b[0] === 'r' ? '#f00' : NAVY, dx(i), ...b.slice(1).split(',').map(Number), 4)).join('');
body += path(indexed(ma5), '#2860f0', 1) + path(indexed(ma10), '#2860f0', 1, '4 3') + bars + path(indexed(ma20), '#f00', 2);
body += '<path d="M579 635h5v7h3l-5.500 6-5.500-6h3z" fill="#00c8ff"/>';
body += text(14, 614, '최저 85,400 (08/25)', '#00f') + text(20, 603, '단기과열', '#000') + text(535, 917, '최고 125,500 (11/24)', '#f00');
draw('b-price', 3, 579, body, sideBar(114, 210));

body = ticks(585, 920, 6.16, 701, [629, 659, 690, 721, 752, 782, 813, 844, 875, 906], '#000');
[[629, '125,000'], [659, '120,000'], [690, '115,000'], [721, '110,000'], [752, '105,000'], [782, '100,000'], [813, '95,000'], [844, '90,000'], [875, '85,000'], [906, '80,000']].forEach(([y, s]) => body += text(708, y + 4, s, '#444'));
body += rect(708, 678, 52, 12, PANEL);
body += text(702, 591, 'LC:38.17', '#f00') + text(702, 603, 'HC:-5.98', NAVY) + badge(705, 665, '118,000', '3.06%', '#f00', '#f00');
draw('b-price-axis', 701, 579, body);

body = grid(mx, [942, 997], 900, 1010, '#ccffff');
vol.forEach((v, i) => body += rect(dx(i) - 4, 998 - v.slice(1), 9, v.slice(1), v[0] === 'n' ? NAVY : GRAY));
const turnover = vol.map((v, i) => [i, i > 51 ? [936, 966, 982, 981, 988, 988, 991, 983][i - 52] : 997 - Math.round(v.slice(1) * .75)]);
body += path(turnover, '#fff', 1) + path(turnover, NAVY, 1, '4 4') + path([[0, 989], [6, 989], [7, 990], [10, 991], [13, 992], [51, 992], [53, 991], [58, 990], [59, 989]], '#109030', 1);
draw('b-volume', 3, 922, body);
body = ticks(930, 997, 11, 701, [942], '#000') + text(708, 946, '2,000K', '#444') + badge(705, 973, '537,734', '229.44%', GRAY, '#999');
draw('b-volume-axis', 701, 922, body);

const columns = (values, zero) => values.map((v, i) => v ? rect(dx(i) - 4, v > 0 ? zero - v : zero - 1, 9, Math.abs(v), v > 0 ? RED : BLUE) : '').join('');
draw('b-inst', 3, 1000, grid(mx, [], 1000, 1060, '#ccffff') + columns(inst, 1040) + path(instHeld, '#000', 2));
draw('b-inst-axis', 701, 1000, ticks(1003, 1048, 6, 701, [1009, 1039], '#000') + text(708, 1043, '0', '#444'));
draw('b-foreign', 3, 1051, grid(mx, [1064], 1050, 1100, '#ccffff') + columns(foreign, 1088) + path(foreignHeld, '#7058c0', 1));
draw('b-foreign-axis', 701, 1051, ticks(1053, 1092, 11, 701, [1064, 1087], '#000') + text(708, 1068, '100,000', '#444') + text(708, 1091, '0', '#444'));
draw('b-times', 3, 1098, months.map(([x, s]) => line(x + .5, 1090, x + .5, 1120, '#000') + text(x + 2, 1110, s, '#444')).join('') + text(4, 1110, '2017/08', '#444'));
```
